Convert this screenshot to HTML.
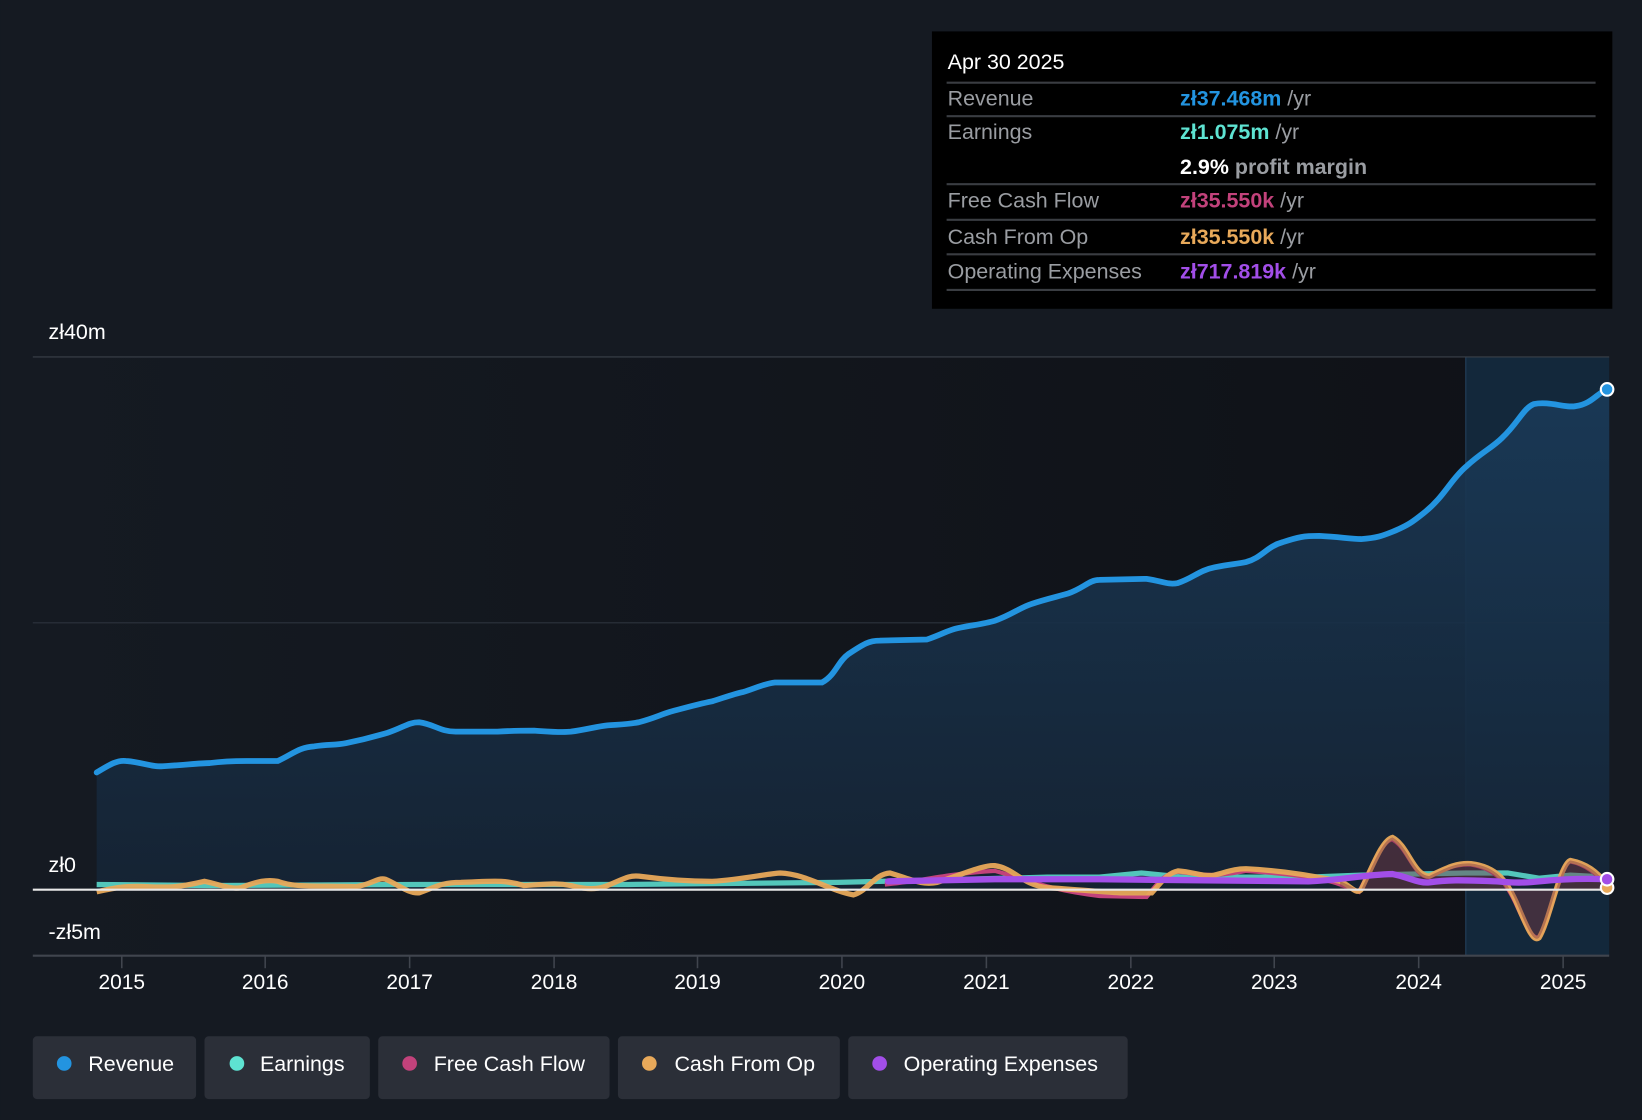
<!DOCTYPE html>
<html><head><meta charset="utf-8"><style>
html,body{margin:0;padding:0;background:#151a22;}
svg{display:block;font-family:"Liberation Sans",sans-serif;}
</style></head><body>
<svg width="1642" height="1120" viewBox="0 0 1568 1070" xmlns="http://www.w3.org/2000/svg">
<defs>
<linearGradient id="rg" x1="0" y1="0" x2="0" y2="1">
<stop offset="0" stop-color="#1a3a58" stop-opacity="0.9"/>
<stop offset="1" stop-color="#152435" stop-opacity="0.9"/>
</linearGradient>
<linearGradient id="bg" x1="0" y1="0" x2="1" y2="0">
<stop offset="0" stop-color="#151a22"/>
<stop offset="1" stop-color="#0e1015"/>
</linearGradient>
</defs>
<rect width="1568" height="1070" fill="#151a22"/>
<rect x="31" y="341" width="1369" height="572" fill="url(#bg)" opacity="0.8"/>
<rect x="1400" y="341" width="137" height="572" fill="#13324c" opacity="0.6"/>
<line x1="1400" y1="341" x2="1400" y2="913" stroke="#24425e" stroke-width="1"/>
<line x1="31" y1="341" x2="1537" y2="341" stroke="#3a404a" stroke-width="1"/>
<line x1="31" y1="595" x2="1537" y2="595" stroke="#2c333d" stroke-width="1"/>
<path d="M92,738 C105,730 112,726 120,727 C135,728 145,733 155,732 C175,731 190,729 200,729 C215,727 225,727 235,727 L265,727 C280,720 285,714 300,713 C315,711 320,712 330,710 C350,706 360,703 370,700 C385,695 390,690 400,690 C415,692 420,699 435,699 L475,699 C490,698 500,698 510,698 C525,699 535,700 545,699 C560,697 570,694 580,693 C595,692 600,692 610,690 C625,686 630,683 640,680 C655,676 665,673 680,670 C690,667 700,663 710,661 C720,658 730,653 740,652 L785,652 C798,645 800,632 810,625 C825,615 830,612 840,612 L885,611 C900,606 905,602 915,600 C930,597 940,596 950,593 C965,588 975,580 985,577 C1000,572 1010,570 1020,567 C1035,562 1040,554 1050,554 L1095,553 C1110,555 1115,559 1125,557 C1140,552 1145,545 1160,542 C1175,539 1180,539 1190,537 C1205,533 1210,522 1225,518 C1240,513 1245,512 1260,512 C1280,513 1290,515 1300,515 C1315,514 1320,512 1330,508 C1345,502 1350,498 1360,490 C1380,474 1385,459 1400,446 C1415,432 1425,428 1435,418 C1450,404 1455,390 1465,386 C1480,383 1495,390 1505,388 C1520,386 1525,376 1535,372 L1537,372 L1537,850 L92,850 Z" fill="url(#rg)"/>
<path d="M92,738 C105,730 112,726 120,727 C135,728 145,733 155,732 C175,731 190,729 200,729 C215,727 225,727 235,727 L265,727 C280,720 285,714 300,713 C315,711 320,712 330,710 C350,706 360,703 370,700 C385,695 390,690 400,690 C415,692 420,699 435,699 L475,699 C490,698 500,698 510,698 C525,699 535,700 545,699 C560,697 570,694 580,693 C595,692 600,692 610,690 C625,686 630,683 640,680 C655,676 665,673 680,670 C690,667 700,663 710,661 C720,658 730,653 740,652 L785,652 C798,645 800,632 810,625 C825,615 830,612 840,612 L885,611 C900,606 905,602 915,600 C930,597 940,596 950,593 C965,588 975,580 985,577 C1000,572 1010,570 1020,567 C1035,562 1040,554 1050,554 L1095,553 C1110,555 1115,559 1125,557 C1140,552 1145,545 1160,542 C1175,539 1180,539 1190,537 C1205,533 1210,522 1225,518 C1240,513 1245,512 1260,512 C1280,513 1290,515 1300,515 C1315,514 1320,512 1330,508 C1345,502 1350,498 1360,490 C1380,474 1385,459 1400,446 C1415,432 1425,428 1435,418 C1450,404 1455,390 1465,386 C1480,383 1495,390 1505,388 C1520,386 1525,376 1535,372" fill="none" stroke="#2394e0" stroke-width="5.5" stroke-linecap="round"/>
<path d="M92,845 L200,846 L400,845 L600,845 L800,843 L1000,838 L1050,838 L1090,834 L1130,838 L1250,838 L1300,836 L1400,834 L1440,834 L1470,839 L1500,836 L1535,838" fill="none" stroke="#5ee3d2" stroke-width="5" opacity="0.85"/>
<path d="M845,845 C880,842 900,835 950,832 C980,840 1000,850 1050,856 L1095,857 C1105,845 1110,835 1125,833 C1150,836 1160,838 1190,832 C1230,835 1260,838 1280,845 L1298,852 C1310,830 1320,802 1330,802 C1345,810 1350,838 1365,838 C1380,830 1390,825 1405,826 C1430,830 1440,845 1450,868 C1460,890 1465,898 1470,895 C1480,880 1490,825 1500,823 C1515,826 1525,835 1535,846" fill="none" stroke="#c2427b" stroke-width="4"/>
<path d="M92,852 C110,848 120,846 140,847 C160,848 170,848 195,842 C210,845 220,850 230,848 C245,842 255,840 265,842 C280,848 300,846 340,847 C355,845 360,838 368,840 C380,845 390,854 400,853 C415,848 420,843 440,843 C470,842 480,840 500,846 C520,845 530,843 545,846 C560,850 570,850 580,846 C595,840 600,836 610,837 C640,841 660,842 680,842 C710,840 730,835 745,834 C770,835 790,850 815,855 C830,850 835,835 850,834 C870,840 880,846 895,843 C920,835 940,826 950,827 C970,830 975,845 1000,848 C1030,850 1050,852 1070,853 L1100,853 C1110,842 1115,834 1125,832 C1140,833 1150,838 1160,836 C1175,832 1180,830 1190,830 C1230,832 1260,838 1280,842 C1290,846 1295,855 1300,850 C1310,830 1320,802 1330,800 C1345,808 1350,836 1365,837 C1380,830 1390,824 1405,825 C1430,828 1440,842 1450,866 C1460,890 1465,900 1470,896 C1480,880 1490,825 1500,822 C1515,825 1525,832 1535,845" fill="none" stroke="#e8a95a" stroke-width="5" opacity="0.95"/>
<path d="M1280,842 C1290,846 1295,850 1300,850 C1310,830 1320,802 1330,800 C1345,808 1350,836 1365,837 C1380,830 1390,824 1405,825 C1430,828 1440,842 1450,866 C1460,890 1465,900 1470,896 C1480,880 1490,825 1500,822 C1515,825 1525,832 1535,845 L1535,850 L1280,850 Z" fill="#7a3a45" opacity="0.45"/>
<path d="M848,842 L950,840 L1050,840 L1150,841 L1250,842 C1280,841 1300,836 1330,835 C1345,838 1355,844 1365,843 C1385,840 1400,841 1430,842 C1450,844 1460,843 1470,842 C1490,840 1510,839 1535,840" fill="none" stroke="#a24ee8" stroke-width="6" stroke-linecap="round"/>
<line x1="31" y1="850" x2="1537" y2="850" stroke="#e8e8e8" stroke-width="2"/>
<line x1="31" y1="913" x2="1537" y2="913" stroke="#40454e" stroke-width="2"/>
<circle cx="1535" cy="372" r="6" fill="#2394e0" stroke="#fff" stroke-width="2"/>
<circle cx="1535" cy="848" r="6" fill="#e8a95a" stroke="#fff" stroke-width="2"/>
<circle cx="1535" cy="840" r="6" fill="#a24ee8" stroke="#fff" stroke-width="2"/>
<g fill="#fff" font-size="20.5">
<text x="46" y="324">zł40m</text>
<text x="46" y="833">zł0</text>
<text x="46" y="897">-zł5m</text>
</g>
<g stroke="#40454e" stroke-width="1.5">
<line x1="116" y1="913" x2="116" y2="925"/><line x1="253" y1="913" x2="253" y2="925"/><line x1="391" y1="913" x2="391" y2="925"/><line x1="529" y1="913" x2="529" y2="925"/><line x1="666" y1="913" x2="666" y2="925"/><line x1="804" y1="913" x2="804" y2="925"/><line x1="942" y1="913" x2="942" y2="925"/><line x1="1080" y1="913" x2="1080" y2="925"/><line x1="1217" y1="913" x2="1217" y2="925"/><line x1="1355" y1="913" x2="1355" y2="925"/><line x1="1493" y1="913" x2="1493" y2="925"/>
</g>
<g fill="#fff" font-size="20" text-anchor="middle">
<text x="116" y="945">2015</text><text x="253" y="945">2016</text><text x="391" y="945">2017</text><text x="529" y="945">2018</text><text x="666" y="945">2019</text><text x="804" y="945">2020</text><text x="942" y="945">2021</text><text x="1080" y="945">2022</text><text x="1217" y="945">2023</text><text x="1355" y="945">2024</text><text x="1493" y="945">2025</text>
</g>
<rect x="890" y="30" width="650" height="265" fill="#000"/>
<g stroke="#3a3d42" stroke-width="2">
<line x1="904" y1="79" x2="1524" y2="79"/><line x1="904" y1="111" x2="1524" y2="111"/><line x1="904" y1="176" x2="1524" y2="176"/><line x1="904" y1="210" x2="1524" y2="210"/><line x1="904" y1="243" x2="1524" y2="243"/><line x1="904" y1="277" x2="1524" y2="277"/>
</g>
<g font-size="20.5">
<text x="905" y="66" fill="#fff">Apr 30 2025</text>
<g fill="#9a9da2">
<text x="905" y="101">Revenue</text><text x="905" y="133">Earnings</text><text x="905" y="198">Free Cash Flow</text><text x="905" y="233">Cash From Op</text><text x="905" y="266">Operating Expenses</text>
</g>
<text x="1127" y="101" font-weight="bold" fill="#2394e0">zł37.468m <tspan fill="#9a9da2" font-weight="normal">/yr</tspan></text>
<text x="1127" y="133" font-weight="bold" fill="#5ee3d2">zł1.075m <tspan fill="#9a9da2" font-weight="normal">/yr</tspan></text>
<text x="1127" y="166" font-weight="bold" fill="#fff">2.9% <tspan fill="#9a9da2">profit margin</tspan></text>
<text x="1127" y="198" font-weight="bold" fill="#c2427b">zł35.550k <tspan fill="#9a9da2" font-weight="normal">/yr</tspan></text>
<text x="1127" y="233" font-weight="bold" fill="#e8a95a">zł35.550k <tspan fill="#9a9da2" font-weight="normal">/yr</tspan></text>
<text x="1127" y="266" font-weight="bold" fill="#a24ee8">zł717.819k <tspan fill="#9a9da2" font-weight="normal">/yr</tspan></text>
</g>
<g fill="#2b2f38">
<rect x="31" y="990" width="156" height="60" rx="4"/><rect x="195" y="990" width="158" height="60" rx="4"/><rect x="361" y="990" width="221" height="60" rx="4"/><rect x="590" y="990" width="212" height="60" rx="4"/><rect x="810" y="990" width="267" height="60" rx="4"/>
</g>
<circle cx="61" cy="1016" r="7" fill="#2394e0"/><circle cx="226" cy="1016" r="7" fill="#5ee3d2"/><circle cx="391" cy="1016" r="7" fill="#c2427b"/><circle cx="620" cy="1016" r="7" fill="#e8a95a"/><circle cx="840" cy="1016" r="7" fill="#a24ee8"/>
<g fill="#fff" font-size="20.5">
<text x="84" y="1023">Revenue</text><text x="248" y="1023">Earnings</text><text x="414" y="1023">Free Cash Flow</text><text x="644" y="1023">Cash From Op</text><text x="863" y="1023">Operating Expenses</text>
</g>
</svg>
</body></html>
